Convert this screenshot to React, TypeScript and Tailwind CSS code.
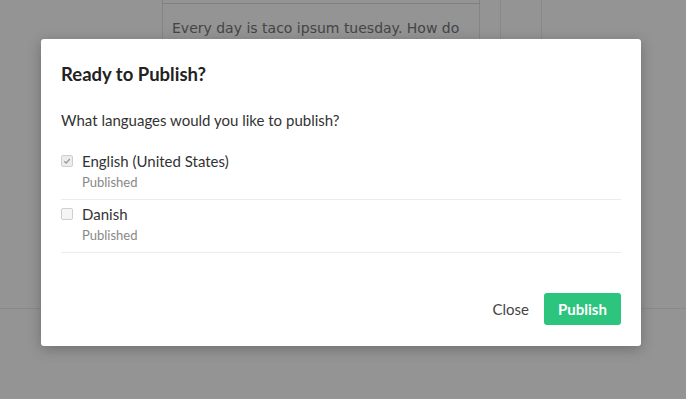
import React from "react";

const languages = [
  { name: "English (United States)", status: "Published", checked: true },
  { name: "Danish", status: "Published", checked: false },
];

export default function App() {
  return (
    <div className="relative h-[399px] w-[686px] overflow-hidden bg-white font-['Lato','Noto_Sans',sans-serif]">
      {/* page behind the modal */}
      <div className="flex h-[309px] border-b border-[#ececec]">
        <div className="w-[162px] shrink-0" />
        <div className="flex w-[318px] shrink-0 flex-col">
          <div className="h-[4px] border-x border-b border-[#dcdcdc]" />
          <div className="flex-1 border-x border-[#e6e6e6] px-[9px] pt-[14px] font-['DejaVu_Sans',sans-serif] text-[14px] text-[#777]">
            Every day is taco ipsum tuesday. How do
          </div>
        </div>
        <div className="w-[20px] shrink-0" />
        <div className="flex-1 border-l border-[#ececec]">
          <div className="ml-[40px] h-full border-l border-[#ececec]" />
        </div>
      </div>

      {/* overlay */}
      <div className="absolute inset-0 bg-[rgba(0,0,0,0.42)]" />

      {/* modal */}
      <div className="absolute left-[41px] top-[39px] flex h-[307px] w-[600px] flex-col rounded-[3px] bg-white px-[20px] shadow-[0_3px_14px_rgba(0,0,0,0.25)]">
        <h2 className="pt-[24px] text-[18.5px] font-bold leading-[22px] text-[#222]">Ready to Publish?</h2>
        <p className="mt-[25px] text-[15px] leading-[20px] text-[#333]">What languages would you like to publish?</p>
        <div className="mt-[17px]">
          {languages.map((l) => (
            <label key={l.name} className="flex gap-[9px] border-b border-[#ececec] pb-[8px] pt-[4px]">
              <span
                className={`mt-[4px] flex h-[12px] w-[12px] items-center justify-center rounded-[2px] border border-[#cfcfcf] ${
                  l.checked ? "bg-[#ececec]" : "bg-[#f5f5f5]"
                }`}
              >
                {l.checked && (
                  <svg viewBox="0 0 10 10" className="h-[8px] w-[8px]">
                    <path d="M1.5 5.2 L4 7.5 L8.5 2.5" fill="none" stroke="#9a9a9a" strokeWidth="1.6" />
                  </svg>
                )}
              </span>
              <div className="flex flex-col">
                <span className="text-[15px] leading-[20px] text-[#333]">{l.name}</span>
                <span className="mt-[2px] text-[13px] leading-[18px] text-[#888]">{l.status}</span>
              </div>
            </label>
          ))}
        </div>
        <div className="mt-auto flex items-center justify-end gap-[14px] pb-[21px]">
          <button className="px-[1px] text-[15px] text-[#444]">Close</button>
          <button className="h-[32px] w-[77px] rounded-[3px] bg-[#2dc47d] text-[15px] font-bold text-white">Publish</button>
        </div>
      </div>
    </div>
  );
}
